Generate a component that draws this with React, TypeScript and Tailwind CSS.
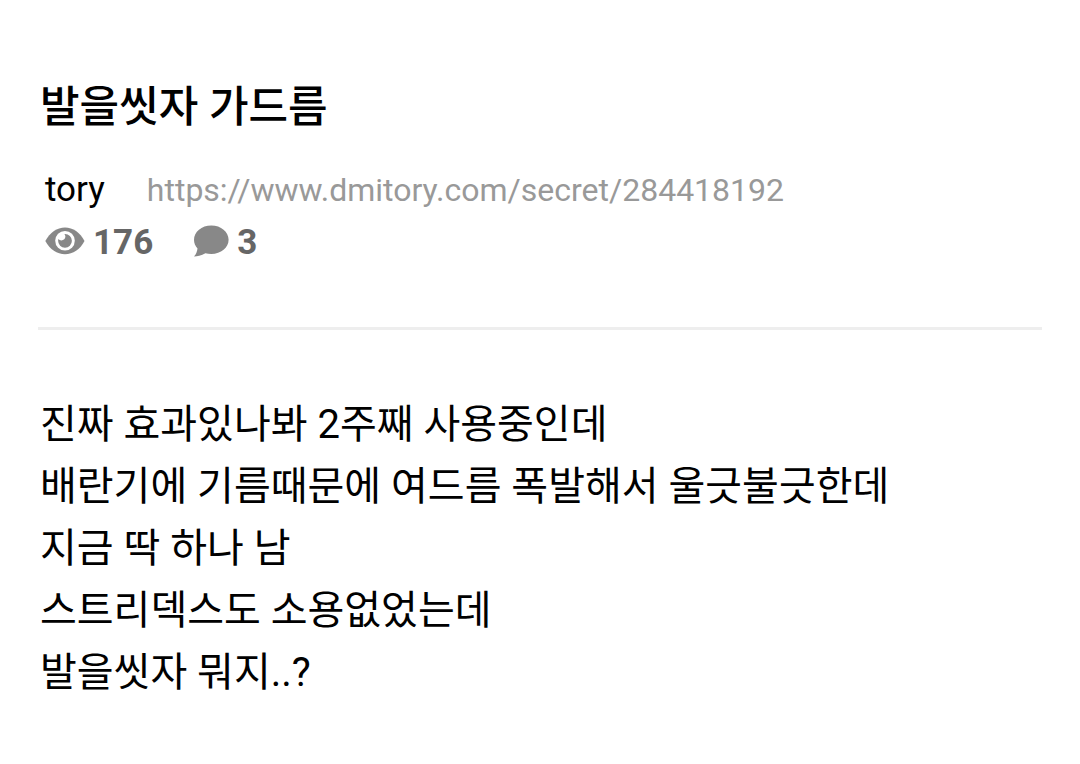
import React from 'react';

const url = 'https://www.dmitory.com/secret/284418192';

const lines = [
  '진짜 효과있나봐 2주째 사용중인데',
  '배란기에 기름때문에 여드름 폭발해서 울긋불긋한데',
  '지금 딱 하나 남',
  '스트리덱스도 소용없었는데',
  '발을씻자 뭐지..?',
];

const EyeIcon: React.FC = () => (
  <svg viewBox="0 0 40 32" className="h-8 w-10 text-[#888888]" fill="none" aria-hidden="true">
    <path
      d="M0.3 14C5 5.5 12 0.6 20 0.6S35 5.5 39.5 14C35 22.5 28 27.2 20 27.2S5 22.5 0.3 14Z"
      fill="currentColor"
    />
    <circle cx="20" cy="13.8" r="9.8" fill="white" />
    <path
      d="M20 6.9A6.9 6.9 0 1 1 13.1 13.8C13.1 13.2 13.2 12.6 13.4 12C14.1 12.9 15.2 13.4 16.4 13.4C18.7 13.4 20.4 11.6 20.4 9.5C20.4 8.5 20 7.6 19.4 6.9Z"
      fill="currentColor"
    />
  </svg>
);

const CommentIcon: React.FC = () => (
  <svg viewBox="0 0 36 36" className="size-9 text-[#888888]" fill="currentColor" aria-hidden="true">
    <path d="M18.3 0.5C28 0.5 35.6 6.8 35.6 14.8S28 29 18.3 29C16.2 29 14.2 28.7 12.4 28.2C9.2 30 5.4 31.2 1 31.6C2.9 29.4 4 27 4.5 23.5C2.3 21.2 1 18.2 1 14.8C1 6.8 8.6 0.5 18.3 0.5Z" />
  </svg>
);

const App: React.FC = () => {
  return (
    <article className="min-h-screen bg-white px-[38px] pt-[77px] pb-12 font-[Roboto,'Noto_Sans_CJK_KR',sans-serif] text-black">
      <header className="border-b-3 border-[#eeeeee] pb-[53px]">
        <h1 className="px-0.5 text-[43px] leading-[60px] font-medium">발을씻자 가드름</h1>
        <div className="mt-[31px] flex items-center gap-[42px] px-[7px] leading-[44px]">
          <span className="text-[35px]">tory</span>
          <a href={url} className="text-[32px] text-[#999999]">{url}</a>
        </div>
        <div className="flex items-center gap-10 px-[7px] text-[35px] leading-[62px] font-bold text-[#666666]">
          <span className="flex items-center gap-2">
            <EyeIcon />
            176
          </span>
          <span className="flex items-center gap-2">
            <CommentIcon />
            3
          </span>
        </div>
      </header>
      <div className="mt-16 px-0.5 text-[40px] leading-[62px]">
        {lines.map((line) => (
          <p key={line}>{line}</p>
        ))}
      </div>
    </article>
  );
};

export default App;
